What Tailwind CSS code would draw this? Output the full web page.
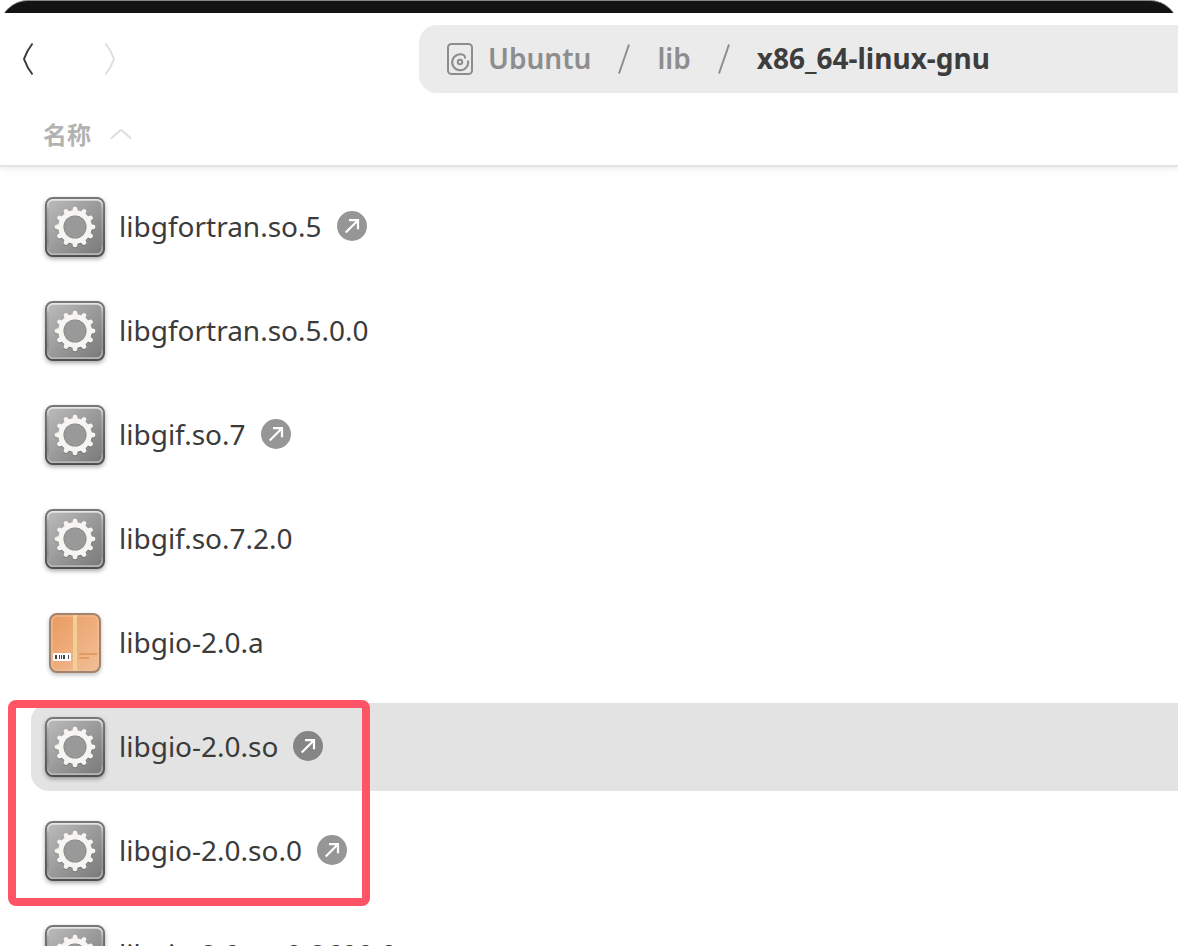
<!DOCTYPE html>
<html lang="zh-CN">
<head>
<meta charset="utf-8">
<meta name="viewport" content="width=device-width, initial-scale=1">
<title>x86_64-linux-gnu</title>
<script src="https://cdn.jsdelivr.net/npm/@tailwindcss/browser@4"></script>
</head>
<body class="relative flex h-screen flex-col overflow-hidden bg-white font-['Noto_Sans','Noto_Sans_CJK_SC',sans-serif] text-[#3b3b3b]">

<!-- Shared icon shapes -->
<svg class="absolute size-0" aria-hidden="true">
  <defs>
    <linearGradient id="plate" x1="0" y1="0" x2="1" y2="1"><stop offset="0" stop-color="#bdbdbd"/><stop offset="1" stop-color="#777"/></linearGradient>
    <linearGradient id="rim" x1="0" y1="0" x2="0" y2="1"><stop offset="0" stop-color="#e6e6e6"/><stop offset=".2" stop-color="#aaa"/><stop offset=".8" stop-color="#8e8e8e"/><stop offset="1" stop-color="#b8b8b8"/></linearGradient>
    <linearGradient id="edge" x1="0" y1="0" x2="0" y2="1"><stop offset="0" stop-color="#777"/><stop offset="1" stop-color="#505050"/></linearGradient>
    <linearGradient id="card" x1="0" y1="0" x2="1" y2="1"><stop offset="0" stop-color="#ea9a60"/><stop offset="1" stop-color="#f2bf98"/></linearGradient>
    <g id="teeth">
      <path id="tooth" d="M26.6 18L27.800 11.400Q28.100 9.800 29.300 9.800H30.700Q31.900 9.800 32.200 11.400L33.400 18Z"/>
      <use href="#tooth" transform="rotate(30 30 30)"/><use href="#tooth" transform="rotate(60 30 30)"/>
      <use href="#tooth" transform="rotate(90 30 30)"/><use href="#tooth" transform="rotate(120 30 30)"/>
      <use href="#tooth" transform="rotate(150 30 30)"/><use href="#tooth" transform="rotate(180 30 30)"/>
      <use href="#tooth" transform="rotate(210 30 30)"/><use href="#tooth" transform="rotate(240 30 30)"/>
      <use href="#tooth" transform="rotate(270 30 30)"/><use href="#tooth" transform="rotate(300 30 30)"/>
      <use href="#tooth" transform="rotate(330 30 30)"/>
      <path fill-rule="evenodd" d="M30 13.200a16.800 16.800 0 1 0 0 33.600a16.800 16.800 0 1 0 0-33.600zM30 18.500a11.500 11.500 0 1 1 0 23a11.500 11.500 0 1 1 0-23z"/>
    </g>
    <symbol id="library" viewBox="0 0 60 60">
      <rect x="1" y="1" width="58" height="58" rx="7" fill="url(#plate)" stroke="url(#edge)" stroke-width="2"/>
      <rect x="2.800" y="2.800" width="54.400" height="54.400" rx="5.500" fill="none" stroke="url(#rim)" stroke-width="1.800"/>
      <use href="#teeth" y="1" fill="#555" opacity=".45"/>
      <circle cx="30" cy="30" r="12" fill="#999"/>
      <circle cx="30" cy="30" r="11.500" fill="none" stroke="#7c7c7c" stroke-width="1.200"/>
      <use href="#teeth" fill="#f6f5f2"/>
    </symbol>
    <symbol id="package" viewBox="0 0 60 60">
      <rect x="5" y="1" width="50" height="58" rx="7" fill="url(#card)" stroke="#a08470" stroke-width="2"/>
      <rect x="7" y="3" width="46" height="54" rx="5" fill="none" stroke="#f4bd95" stroke-width="1.500" opacity=".7"/>
      <rect x="28" y="2" width="4" height="56" fill="#f2cf97"/>
      <rect x="8" y="40" width="18" height="8" fill="#fff"/>
      <path d="M10 42h2v4h-2zM14 42h1v4h-1zM16 42h1v4h-1zM18 42h2v4h-2zM23 42h1v4h-1z" fill="#444"/>
      <path d="M34 40h18v2H34zM34 44h10v2H34z" fill="#e39b66"/>
    </symbol>
    <symbol id="symlink" viewBox="0 0 30 30">
      <circle cx="15" cy="15" r="15" fill="#000" opacity=".41"/>
      <path d="M8.700 21.500L20.500 9.700M12 9.200h9v9" fill="none" stroke="#fff" stroke-width="2.200"/>
    </symbol>
  </defs>
</svg>

<div class="h-[13px] shrink-0 overflow-hidden">
  <div class="h-8 rounded-t-[28px] border-t border-[#858a85] bg-[#131313]"></div>
</div>

<header class="flex shrink-0 items-center pt-3">
  <nav class="flex w-[419px] shrink-0 items-center gap-12 pl-3" aria-label="导航">
    <button type="button" aria-label="后退" class="grid h-11 w-8 place-items-center">
      <svg class="h-9 w-8" viewBox="0 0 32 36" fill="none" stroke="#3a3a3a" stroke-width="2"><path d="M20.500 2.500Q15 9.500 12 18Q15 26.500 20.500 33.500"/></svg>
    </button>
    <button type="button" aria-label="前进" disabled class="grid h-11 w-8 place-items-center">
      <svg class="h-9 w-8" viewBox="0 0 32 36" fill="none" stroke="#dedede" stroke-width="2"><path d="M13.500 2.500Q19 9.500 22 18Q19 26.500 13.500 33.500"/></svg>
    </button>
  </nav>
  <nav class="flex h-[68px] min-w-0 flex-1 items-center gap-[27px] rounded-l-[18px] bg-[#ebebeb] pl-7 text-[28px]/[40px] font-semibold whitespace-nowrap text-[#8d8d8d]" aria-label="路径">
    <a href="#" class="flex items-center gap-[15px]">
      <svg class="h-8 w-[26px]" viewBox="0 0 26 32" fill="none" stroke="#8d8d8d" stroke-width="2">
        <rect x="1" y="1" width="24" height="30" rx="3.500"/>
        <path d="M17.500 12.500A8 8 0 1 0 21 17.500M17.500 12.500L18.200 15.500"/>
        <circle cx="13" cy="19" r="2.200"/>
      </svg>
      <span class="pb-0.5">Ubuntu</span>
    </a>
    <svg class="h-[30px] w-3" viewBox="0 0 12 30" stroke="#8d8d8d" stroke-width="2"><path d="M1 29.500L11 .5"/></svg>
    <a href="#" class="pb-0.5">lib</a>
    <svg class="h-[30px] w-3" viewBox="0 0 12 30" stroke="#8d8d8d" stroke-width="2"><path d="M1 29.500L11 .5"/></svg>
    <a href="#" aria-current="page" class="pb-0.5 font-bold text-[#3d3d3d]">x86_64-linux-gnu</a>
  </nav>
</header>

<div class="relative shrink-0 border-b-2 border-[#e4e4e4] pt-3 shadow-[0_3px_5px_rgba(0,0,0,0.06)]">
  <button type="button" class="flex h-15 items-center gap-[19px] pl-[43px] text-2xl/8 font-bold text-[#b2b2b2]">
    <span>名称</span>
    <svg class="h-3 w-[22px]" viewBox="0 0 22 12" fill="none" stroke="#dedede" stroke-width="2"><path d="M1 9.500L11 .8L21 9.500"/></svg>
  </button>
</div>

<main class="min-h-0 flex-1 overflow-hidden pt-4 pl-[31px]">
  <ul class="flex flex-col gap-4 text-[28px]/[40px] whitespace-nowrap">
    <li><a href="#" class="flex h-[88px] items-center rounded-l-[18px] pl-3.5"><svg class="mr-3.5 size-15 drop-shadow-[0_2px_2px_rgba(0,0,0,0.35)]"><use href="#library"/></svg><span class="pb-[3px]">libgfortran.so.5</span><svg class="mb-0.5 ml-[15px] size-[30px]"><use href="#symlink"/></svg></a></li>
    <li><a href="#" class="flex h-[88px] items-center rounded-l-[18px] pl-3.5"><svg class="mr-3.5 size-15 drop-shadow-[0_2px_2px_rgba(0,0,0,0.35)]"><use href="#library"/></svg><span class="pb-[3px]">libgfortran.so.5.0.0</span></a></li>
    <li><a href="#" class="flex h-[88px] items-center rounded-l-[18px] pl-3.5"><svg class="mr-3.5 size-15 drop-shadow-[0_2px_2px_rgba(0,0,0,0.35)]"><use href="#library"/></svg><span class="pb-[3px]">libgif.so.7</span><svg class="mb-0.5 ml-[15px] size-[30px]"><use href="#symlink"/></svg></a></li>
    <li><a href="#" class="flex h-[88px] items-center rounded-l-[18px] pl-3.5"><svg class="mr-3.5 size-15 drop-shadow-[0_2px_2px_rgba(0,0,0,0.35)]"><use href="#library"/></svg><span class="pb-[3px]">libgif.so.7.2.0</span></a></li>
    <li><a href="#" class="flex h-[88px] items-center rounded-l-[18px] pl-3.5"><svg class="mr-3.5 size-15 drop-shadow-[0_2px_2px_rgba(0,0,0,0.25)]"><use href="#package"/></svg><span class="pb-[3px]">libgio-2.0.a</span></a></li>
    <li><a href="#" aria-current="true" class="flex h-[88px] items-center rounded-l-[18px] bg-[#e3e3e3] pl-3.5"><svg class="mr-3.5 size-15 drop-shadow-[0_2px_2px_rgba(0,0,0,0.35)]"><use href="#library"/></svg><span class="pb-[3px]">libgio-2.0.so</span><svg class="mb-0.5 ml-[15px] size-[30px]"><use href="#symlink"/></svg></a></li>
    <li><a href="#" class="flex h-[88px] items-center rounded-l-[18px] pl-3.5"><svg class="mr-3.5 size-15 drop-shadow-[0_2px_2px_rgba(0,0,0,0.35)]"><use href="#library"/></svg><span class="pb-[3px]">libgio-2.0.so.0</span><svg class="mb-0.5 ml-[15px] size-[30px]"><use href="#symlink"/></svg></a></li>
    <li><a href="#" class="flex h-[88px] items-center rounded-l-[18px] pl-3.5"><svg class="mr-3.5 size-15 drop-shadow-[0_2px_2px_rgba(0,0,0,0.35)]"><use href="#library"/></svg><span class="pb-[3px]">libgio-2.0.so.0.8600.0</span></a></li>
  </ul>
</main>

<!-- Highlight frame over the two libgio entries -->
<div class="pointer-events-none absolute top-[700px] left-2 h-[206px] w-[362px] rounded-lg border-8 border-[#ff5466]"></div>

</body>
</html>
